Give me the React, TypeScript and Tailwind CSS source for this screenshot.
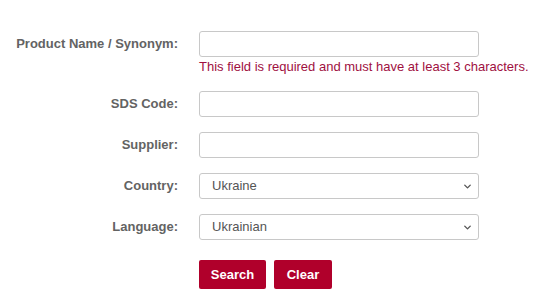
import { ChevronDown } from "lucide-react"

const labelCls = "text-right text-[13px] font-bold text-[#636363] leading-[26px]"
const inputCls = "h-[26px] w-[280px] rounded-[3px] border border-[#c8c8c8] bg-white px-3 text-[13px] text-[#555] outline-none"

function SelectBox({ value }: { value: string }) {
  return (
    <div className="relative w-[280px]">
      <select
        defaultValue={value}
        className={`${inputCls} appearance-none`}
      >
        <option>{value}</option>
      </select>
      <ChevronDown className="pointer-events-none absolute right-[6px] top-[8px] h-[11px] w-[11px] text-[#555]" strokeWidth={3} />
    </div>
  )
}

export default function App() {
  return (
    <div
      className="h-[293px] w-[539px] bg-white pt-[31px]"
      style={{ fontFamily: '"Liberation Sans", Arial, sans-serif' }}
    >
      <div className="grid grid-cols-[178px_280px] gap-x-[21px]">
        {/* Product name */}
        <label className={labelCls}>Product Name / Synonym:</label>
        <div>
          <input type="text" className={inputCls} />
          <p className="whitespace-nowrap text-[13px] leading-[18px] text-[#a0103f] mt-[1px]">
            This field is required and must have at least 3 characters.
          </p>
        </div>

        <label className={`${labelCls} mt-[15px]`}>SDS Code:</label>
        <input type="text" className={`${inputCls} mt-[15px]`} />

        <label className={`${labelCls} mt-[15px]`}>Supplier:</label>
        <input type="text" className={`${inputCls} mt-[15px]`} />

        <label className={`${labelCls} mt-[15px]`}>Country:</label>
        <div className="mt-[15px]">
          <SelectBox value="Ukraine" />
        </div>

        <label className={`${labelCls} mt-[15px]`}>Language:</label>
        <div className="mt-[15px]">
          <SelectBox value="Ukrainian" />
        </div>

        <div />
        <div className="mt-[20px] flex gap-[8px]">
          <button className="h-[29px] w-[67px] rounded-[2px] bg-[#b0002b] text-[13px] font-bold text-white">
            Search
          </button>
          <button className="h-[29px] w-[58px] rounded-[2px] bg-[#b0002b] text-[13px] font-bold text-white">
            Clear
          </button>
        </div>
      </div>
    </div>
  )
}
